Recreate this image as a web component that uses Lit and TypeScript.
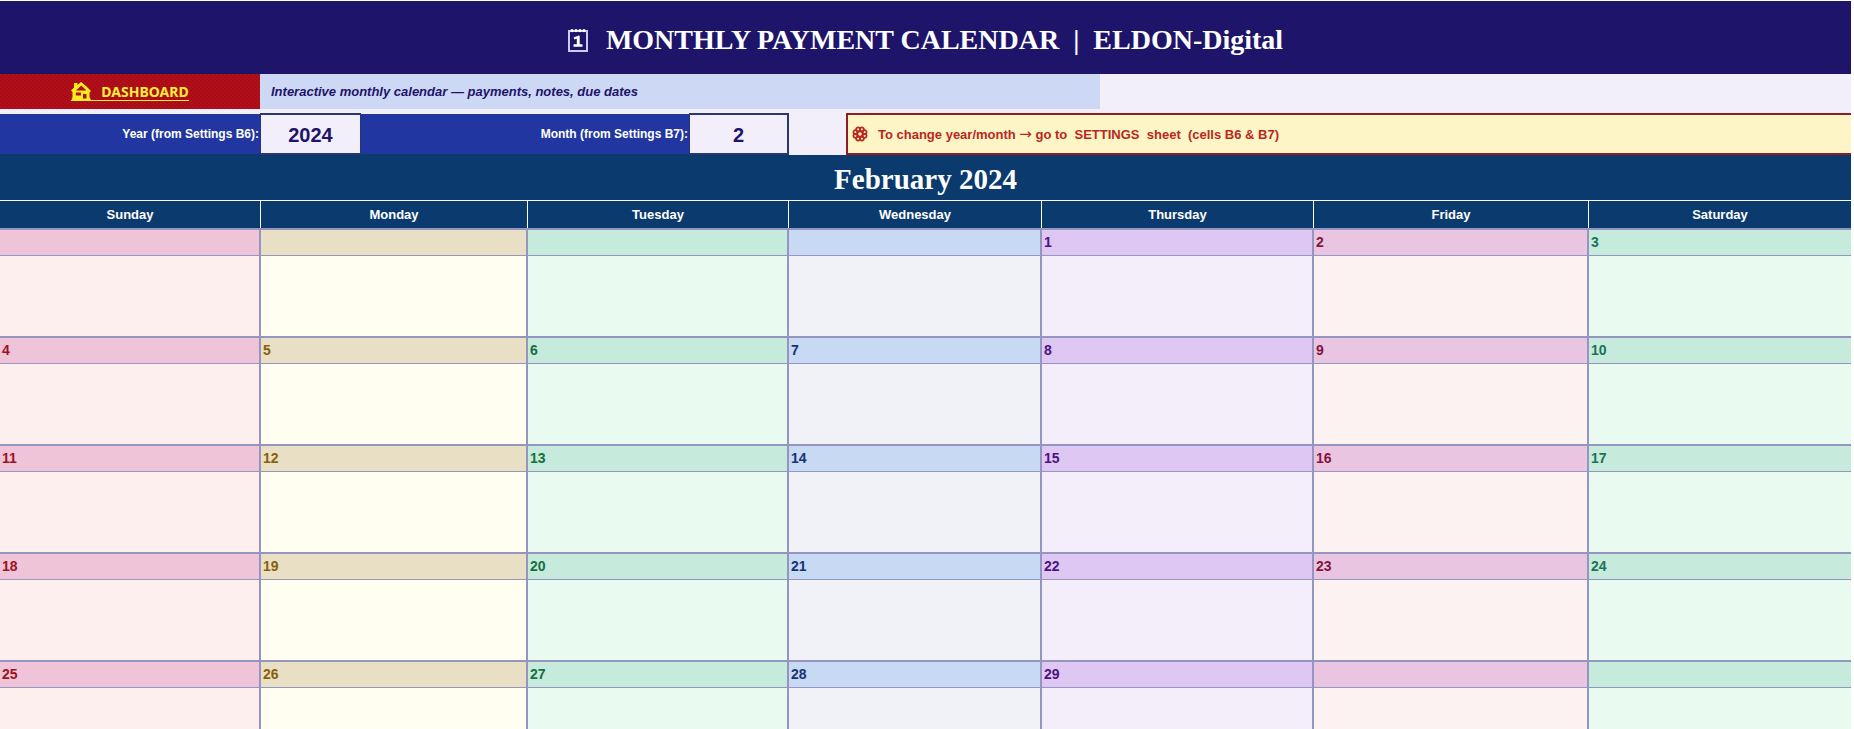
import { LitElement, html, css, svg } from "lit";
import { customElement, property } from "lit/decorators.js";

const DAYS = ["Sunday", "Monday", "Tuesday", "Wednesday", "Thursday", "Friday", "Saturday"];
const MONTHS = ["January", "February", "March", "April", "May", "June", "July", "August", "September", "October", "November", "December"];

const calendarIcon = html`<svg class="icon-calendar" viewBox="0 0 20 24" aria-hidden="true">
  <rect x="1" y="3" width="18" height="20" fill="none" stroke="#cfc8f0" stroke-width="2" />
  ${[4, 8, 12, 16].map((x) => svg`<circle cx=${x} cy="2.6" r="1.6" fill="#fff" />`)}
  <path d="M6 10.5L10 9V17M5.5 17.5H14.5M10.5 8V17.5" fill="none" stroke="#fff" stroke-width="2.4" />
</svg>`;

const houseIcon = html`<svg class="icon-house" viewBox="0 0 20 18" aria-hidden="true">
  <path fill="#ffee1c" fill-rule="evenodd" d="M3 1H6.5V3L10 0L15 4L20 9L18.5 10.5V15L20 18H0.5L1.5 15V10L0 8.5L3 5.5ZM10.3 3.6L5 8.6H15.5ZM4.8 10.4V13.6H10V10.4ZM12 12V16.6H15.5V12Z" />
</svg>`;

const flowerIcon = html`<svg class="icon-flower" viewBox="0 0 16 16" aria-hidden="true">
  ${[22.5, 67.5, 112.5, 157.5, 202.5, 247.5, 292.5, 337.5].map(
    (a) => svg`<circle cx="8" cy="3" r="1.9" fill="none" stroke="#b8281f" stroke-width="1.7" transform="rotate(${a} 8 8)" />`
  )}
  <circle cx="8" cy="8" r="2.6" fill="none" stroke="#b8281f" stroke-width="1.6" />
</svg>`;

@customElement("app-root")
export class AppRoot extends LitElement {
  @property({ type: Number }) year = 2024;
  @property({ type: Number }) month = 2;

  static styles = css`
    :host {
      display: block;
      height: 100vh;
      overflow: hidden;
      box-sizing: border-box;
      padding: 1px 3px 0 0;
      background: #fff;
      font-family: "Liberation Sans", Arial, sans-serif;
      font-weight: 700;
      color: #fff;
    }
    .title {
      display: flex;
      align-items: center;
      justify-content: center;
      gap: 18px;
      box-sizing: border-box;
      height: 73px;
      margin: 0;
      padding-top: 4px;
      background: #1e146a;
      font: 700 28px/32px "Liberation Serif", "Times New Roman", serif;
      white-space: pre;
    }
    .icon-calendar { width: 20px; height: 24px; }
    .toolbar {
      display: grid;
      grid-template-columns: 260fr 840fr 751fr;
      height: 35px;
      background: #f3effa;
    }
    .dashboard {
      display: flex;
      align-items: center;
      justify-content: center;
      background: repeating-conic-gradient(#a30f18 0 25%, #b80c17 0 50%) 0 0 / 4px 4px;
      color: #ffee3c;
      font: 700 14px/16px "Noto Sans", sans-serif;
      text-decoration: none;
    }
    .link-text {
      display: flex;
      gap: 10px;
      align-items: flex-end;
      border-bottom: 1px solid #ffee3c;
    }
    .icon-house { width: 20px; height: 18px; }
    .subtitle {
      margin: 0;
      padding-left: 11px;
      background: #cdd8f5;
      color: #1e146a;
      font: italic 700 13px/35px "Liberation Sans", Arial, sans-serif;
    }
    .settings {
      display: grid;
      grid-template-columns: 260fr 101fr 328fr 100fr 57fr 1005fr;
      height: 42px;
      padding-top: 4px;
      background: #f3effa;
    }
    .label {
      margin-top: 1px;
      padding-right: 1px;
      border-bottom: 1px solid #0b3a6f;
      background: #2136a1;
      font-size: 12px;
      line-height: 40px;
      text-align: right;
    }
    .value {
      box-sizing: border-box;
      width: 100%;
      min-width: 0;
      height: 42px;
      margin: 0;
      padding: 3px 0 0;
      border: solid #2b3570;
      border-width: 2px 1px;
      border-radius: 0;
      background: #f3effa;
      color: #1e146a;
      font: 700 20px/24px "Liberation Sans", Arial, sans-serif;
      text-align: center;
      outline: none;
    }
    .month-value { border-right-width: 2px; }
    .notice {
      grid-column: 6;
      display: flex;
      align-items: center;
      gap: 10px;
      margin: 0;
      padding-left: 4px;
      border: 2px solid #8c1f26;
      border-right: 0;
      background: #fdf5c6;
      color: #b8281f;
      font-size: 13px;
      white-space: pre;
    }
    .arrow { font: 400 15px/16px "DejaVu Sans", sans-serif; }
    .icon-flower { width: 16px; height: 16px; }
    .calendar { display: block; }
    .calendar caption {
      display: block;
      height: 45px;
      background: #0b3a6f;
      font: 700 29px/48px "Liberation Serif", "Times New Roman", serif;
      text-align: center;
    }
    thead, tbody { display: block; }
    .row {
      display: grid;
      grid-template-columns: 261fr 267fr 261fr 253fr 272fr 275fr 262fr;
    }
    .weekday {
      height: 27px;
      padding: 0;
      border-top: 1px solid #fff;
      border-right: 1px solid #fff;
      background: #0b3a6f;
      font-size: 13px;
      line-height: 27px;
      text-align: center;
    }
    .day {
      padding: 0;
      border-top: 2px solid #9596bf;
      border-right: 2px solid #9596bf;
      background: var(--body);
    }
    .weekday:last-child, .day:last-child { border-right: 0; }
    .date {
      display: block;
      height: 25px;
      padding-left: 2px;
      border-bottom: 1px solid #9596bf;
      background: var(--band);
      color: var(--ink);
      font-size: 14px;
      line-height: 25px;
    }
    .note { height: 80px; }
    .day-0 { --band: #f0c4d8; --body: #fdefee; --ink: #9c1420; }
    .day-1 { --band: #e9dfc5; --body: #fffef1; --ink: #8a5f0c; }
    .day-2 { --band: #c6ebdc; --body: #e9faf1; --ink: #15703f; }
    .day-3 { --band: #c7d9f3; --body: #f0f2f8; --ink: #173374; }
    .day-4 { --band: #dec7f2; --body: #f4eefb; --ink: #4c1284; }
    .day-5 { --band: #eac5e2; --body: #fcf2f1; --ink: #85143f; }
    .day-6 { --band: #c6ebdc; --body: #e9faf1; --ink: #1b735a; }
  `;

  private get weeks(): (number | null)[][] {
    const offset = new Date(this.year, this.month - 1, 1).getDay();
    const total = new Date(this.year, this.month, 0).getDate();
    const count = Math.ceil((offset + total) / 7);
    return Array.from({ length: count }, (_, w) =>
      DAYS.map((_, d) => {
        const n = w * 7 + d - offset + 1;
        return n >= 1 && n <= total ? n : null;
      })
    );
  }

  render() {
    return html`
      <h1 class="title">${calendarIcon}<span>MONTHLY PAYMENT CALENDAR  |  ELDON-Digital</span></h1>
      <div class="toolbar">
        <a class="dashboard" href="#dashboard"><span class="link-text">${houseIcon}<span>DASHBOARD</span></span></a>
        <p class="subtitle">Interactive monthly calendar — payments, notes, due dates</p>
      </div>
      <div class="settings">
        <label class="label" for="year">Year (from Settings B6):</label>
        <input class="value" id="year" readonly .value=${String(this.year)} />
        <label class="label" for="month">Month (from Settings B7):</label>
        <input class="value month-value" id="month" readonly .value=${String(this.month)} />
        <p class="notice">${flowerIcon}<span>To change year/month <span class="arrow">→</span> go to  SETTINGS  sheet  (cells B6 &amp; B7)</span></p>
      </div>
      <table class="calendar">
        <caption>${MONTHS[this.month - 1]} ${this.year}</caption>
        <thead>
          <tr class="row">${DAYS.map((d) => html`<th class="weekday" scope="col">${d}</th>`)}</tr>
        </thead>
        <tbody>
          ${this.weeks.map(
            (week) => html`<tr class="row">
              ${week.map((n, d) => html`<td class="day day-${d}"><span class="date">${n ?? ""}</span><div class="note"></div></td>`)}
            </tr>`
          )}
        </tbody>
      </table>
    `;
  }
}
